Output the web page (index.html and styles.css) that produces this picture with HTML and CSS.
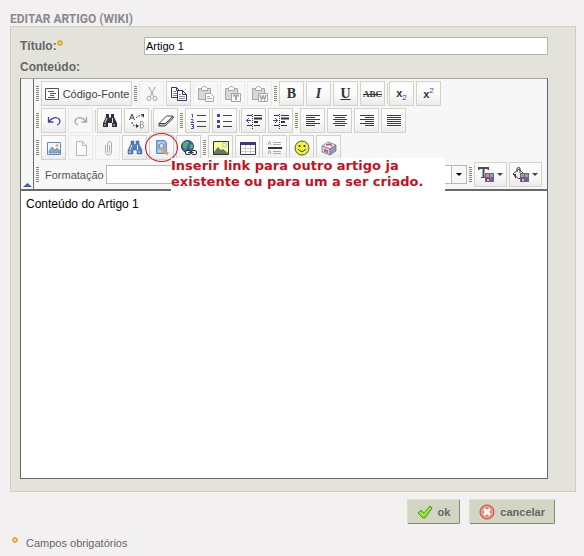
FILE: index.html
```html
<!DOCTYPE html>
<html lang="pt-BR">
<head>
<meta charset="utf-8">
<title>Editar artigo (Wiki)</title>
<link rel="stylesheet" href="styles.css">
</head>
<body>
<form class="page">
  <h1 class="title">EDITAR ARTIGO (WIKI)</h1>
  <section class="panel">
    <div class="field">
      <label class="label" for="titulo">Título:<svg class="star" viewBox="0 0 6 6"><path d="M3 0v6M0 3h6M1 1l4 4M5 1L1 5" stroke="#e8a014"/><path d="M2 2h2v2H2z" fill="#fbe7a8"/></svg></label>
      <input class="text" id="titulo" type="text" value="Artigo 1">
    </div>
    <label class="label content-label" for="conteudo">Conteúdo:</label>
    <div class="editor">
      <div class="toolbar">
        <button class="collapse" type="button" aria-label="Recolher"><svg width="9" height="4" viewBox="0 0 9 4"><path d="M0 4h9L4.500 0z" fill="#3c5fa8"/></svg></button>
        <div class="rows">
          <div class="row">
            <span class="grip"></span>
            <button class="tool source" type="button"><svg viewBox="0 0 16 16"><path d="M1.500 2.500h13v11h-13z" fill="#fff" stroke="#51525c"/><path d="M4 5.500h6M6 7.500h6M6 9.500h4M4 11.500h7" stroke="#51525c"/></svg>Código-Fonte</button>
            <span class="grip"></span>
            <button class="tool" type="button" disabled aria-label="Recortar"><svg viewBox="0 0 16 16" fill="none" stroke="#555"><path d="M5 1l5 10M11 1L6 11"/><circle cx="5" cy="12.500" r="2"/><circle cx="11" cy="12.500" r="2"/></svg></button>
            <button class="tool" type="button" aria-label="Copiar"><svg viewBox="0 0 16 16" fill="#fff" stroke="#343464"><path d="M.5 1.500h5l3 3v7h-8zM5.500 1.500v3h3"/><path d="M2 5.500h3M2 7.500h4M2 9.500h4" stroke="#8888a8"/><path d="M6.500 4.500h5l4 4v6h-9zM11.500 4.500v4h4"/><path d="M8 8.500h2M8 10.500h6M8 12.500h6" stroke="#8888a8"/></svg></button>
            <button class="tool" type="button" disabled aria-label="Colar"><svg viewBox="0 0 16 16" fill="#bbb" stroke="#555"><path d="M.5 2.500h12v11H.5z"/><path d="M3.500 4.500v-2l2-2h2l2 2v2z" fill="#fff"/><path d="M7.500 7.500h5l3 3v5h-8z" fill="#fff"/><path d="M9 10.500h3M9 12.500h5"/></svg></button>
            <button class="tool" type="button" disabled aria-label="Colar como texto"><svg viewBox="0 0 16 16" fill="#bbb" stroke="#555"><path d="M.5 2.500h12v11H.5z"/><path d="M3.500 4.500v-2l2-2h2l2 2v2z" fill="#fff"/><path d="M6.500 7.500h9v8h-9z" fill="#fff"/><path d="M8 9.500h6M11 9v5" stroke-width="2"/></svg></button>
            <button class="tool" type="button" disabled aria-label="Colar do Word"><svg viewBox="0 0 16 16" fill="#bbb" stroke="#555"><path d="M.5 2.500h12v11H.5z"/><path d="M3.500 4.500v-2l2-2h2l2 2v2z" fill="#fff"/><path d="M6.500 7.500h9v8h-9z" fill="#fff"/><path d="M8 9l1.500 4.500L11 10l1.500 3.500L14 9" fill="none" stroke-width="1.500"/></svg></button>
            <span class="grip"></span>
            <button class="tool letter bold" type="button">B</button>
            <button class="tool letter italic" type="button">I</button>
            <button class="tool letter underline" type="button">U</button>
            <button class="tool letter strike" type="button">ABC</button>
            <span class="sep"></span>
            <button class="tool letter script" type="button">x<sub>2</sub></button>
            <button class="tool letter script" type="button">x<sup>2</sup></button>
          </div>
          <div class="row">
            <span class="grip"></span>
            <button class="tool" type="button" aria-label="Desfazer"><svg viewBox="0 0 16 16" fill="none" stroke="#4040a0" stroke-width="1.300"><path d="M2.500 4v5h5M3 8.500c3-4 7-5 10-2.500 2 2 1 5-2 6"/></svg></button>
            <button class="tool" type="button" disabled aria-label="Refazer"><svg viewBox="0 0 16 16" fill="none" stroke="#555" stroke-width="1.300"><path d="M13.500 4v5h-5M13 8.500c-3-4-7-5-10-2.500-2 2-1 5 2 6"/></svg></button>
            <span class="sep"></span>
            <button class="tool" type="button" aria-label="Localizar"><svg viewBox="0 0 16 16"><path d="M4 1h3v3l1 1 1-1V1h3v3l3 6v4h-5v-4H6v4H1v-4l3-6z" fill="#303038"/><path d="M5 5l-2 5M10.500 5v5M3 11v2M12 11v2" stroke="#ddd"/></svg></button>
            <button class="tool" type="button" aria-label="Substituir"><svg viewBox="0 0 16 16" fill="none"><path d="M.5 7l2.500-6 2.500 6M1.500 5h3" stroke="#444"/><path d="M11.500 15V8.500h2q2 1.500 0 3h-2M13.500 11.500q3 1.500 0 3.500h-2" stroke="#999"/><path d="M7 5q2-3 6-2M3 9q0 4 5 4" stroke="#333" stroke-dasharray="2 1"/><path d="M12 1h3v4zM7 11v4l3-2z" fill="#333"/></svg></button>
            <span class="sep"></span>
            <button class="tool" type="button" aria-label="Remover formatação"><svg viewBox="0 0 16 16" stroke="#44444a" stroke-linejoin="round"><path d="M1 10.500L8.500 3H15l-7.500 7.500z" fill="#fff"/><path d="M1 10.500V13h6l8-7.500V3l-7.500 7.500z" fill="#bbb"/></svg></button>
            <span class="grip"></span>
            <button class="tool" type="button" aria-label="Lista numerada"><svg viewBox="0 0 16 16" fill="none"><path d="M7 2.500h9M7 8.500h9M7 13.500h9" stroke="#444"/><path d="M1.500 1.500h1v3M1 6.500h2v1l-2 2h3M1 11.500h2.500v2H2h1.500v2H1" stroke="#4545a5"/></svg></button>
            <button class="tool" type="button" aria-label="Lista com marcadores"><svg viewBox="0 0 16 16"><path d="M6 2.500h9M6 8.500h9M6 13.500h9" stroke="#444"/><path d="M0 1h3v3H0zM0 7h3v3H0zM0 12h3v3H0z" fill="#4545a5"/></svg></button>
            <span class="sep"></span>
            <button class="tool" type="button" aria-label="Diminuir recuo"><svg viewBox="0 0 16 16"><path d="M1 2.500h5M8 2.500h8M8 12.500h6M1 12.500h5" stroke="#333"/><path d="M8 5.500h8M8 9h4" stroke="#333" stroke-width="2"/><path d="M6.500 1v15" stroke="#333" stroke-dasharray="1 1"/><path d="M0 7.500h5M3 5L.5 7.500 3 10" stroke="#4545b5" fill="none"/></svg></button>
            <button class="tool" type="button" aria-label="Aumentar recuo"><svg viewBox="0 0 16 16"><path d="M1 2.500h5M8 2.500h8M8 12.500h6M1 12.500h5" stroke="#333"/><path d="M8 5.500h8M8 9h4" stroke="#333" stroke-width="2"/><path d="M6.500 1v15" stroke="#333" stroke-dasharray="1 1"/><path d="M0 7.500h5M2 5l2.500 2.500L2 10" stroke="#4545b5" fill="none"/></svg></button>
            <span class="grip"></span>
            <button class="tool" type="button" aria-label="Esquerda"><svg viewBox="0 0 16 16" stroke="#3c3c3c"><path d="M1 2.500h14M1 4.500h9M1 6.500h14M1 8.500h9M1 10.500h14M1 12.500h9"/></svg></button>
            <button class="tool" type="button" aria-label="Centralizar"><svg viewBox="0 0 16 16" stroke="#3c3c3c"><path d="M1 2.500h14M3 4.500h10M1 6.500h14M3 8.500h10M1 10.500h14M3 12.500h10"/></svg></button>
            <button class="tool" type="button" aria-label="Direita"><svg viewBox="0 0 16 16" stroke="#3c3c3c"><path d="M1 2.500h14M6 4.500h9M1 6.500h14M6 8.500h9M1 10.500h14M6 12.500h9"/></svg></button>
            <button class="tool" type="button" aria-label="Justificar"><svg viewBox="0 0 16 16" stroke="#3c3c3c"><path d="M1 2.500h14M1 4.500h14M1 6.500h14M1 8.500h14M1 10.500h14M1 12.500h14"/></svg></button>
          </div>
          <div class="row">
            <span class="grip"></span>
            <button class="tool" type="button" aria-label="Imagem"><svg viewBox="0 0 16 16"><path d="M1.500 2.500h13v12h-13z" fill="#f2f8ff" stroke="#6688b8"/><path d="M3 11l3-4 3 3 2-2 3 3v2H3z" fill="#87a9c9" stroke="#5c7fa8" stroke-width=".7"/><circle cx="11" cy="5.500" r="1.500" fill="#f2ad62"/></svg></button>
            <button class="tool" type="button" disabled aria-label="Arquivo"><svg viewBox="0 0 16 16"><path d="M3.500 1.500h6l4 4v10h-10zM9.500 1.500v4h4" fill="#fff" stroke="#777"/></svg></button>
            <button class="tool" type="button" disabled aria-label="Anexo"><svg viewBox="0 0 16 16" fill="none" stroke="#666"><path d="M5.500 5v7q0 3 3 3t3-3V4q0-2.500-2-2.500T7.500 4v7q0 1.500 1 1.500t1-1.500V5"/></svg></button>
            <button class="tool" type="button" aria-label="Pesquisar"><svg viewBox="0 0 16 16"><path d="M4 1h3v3l1 1 1-1V1h3v3l3 6v4h-5v-4H6v4H1v-4l3-6z" fill="#557fb8" stroke="#345c94" stroke-width=".5"/><path d="M5 5l-2 5M10.500 5v5M3 11v2M12 11v2" stroke="#dceaff"/></svg></button>
            <button class="tool marked" type="button" aria-label="Link para artigo"><svg viewBox="0 0 16 16"><path d="M2.500.5h8l2 2v11h-10z" fill="#8fb8e4" stroke="#5e8fc4"/><path d="M4 3h6M4 11h5" stroke="#e5f2ff"/><circle cx="7.500" cy="6" r="2.500" fill="#cfe4f7" stroke="#6b8198"/><path d="M6 8l8 6" stroke="#cfa27a" stroke-width="3"/></svg></button>
            <button class="tool" type="button" aria-label="Link"><svg viewBox="0 0 16 16"><circle cx="6.500" cy="6.500" r="6" fill="#3265b5" stroke="#263f6e"/><path d="M2 3l4-2 2 2-2 3-1 4-3-3zM9 4l3 1v3l-3 1z" fill="#65a95b"/><rect x="4.500" y="10.500" width="5" height="4" rx="1.500" fill="#fff" stroke="#222"/><rect x="10.500" y="10.500" width="5" height="4" rx="1.500" fill="#fff" stroke="#222"/><path d="M7 12.500h6" stroke="#444"/></svg></button>
            <span class="grip"></span>
            <button class="tool" type="button" aria-label="Inserir figura"><svg viewBox="0 0 16 16"><path d="M.5 1.500h15v13H.5z" fill="#fafa94" stroke="#333"/><path d="M1 12l4-5 3 3 2-1 5 4v1H1z" fill="#676"/><circle cx="11.500" cy="5" r="2" fill="#fff" stroke="#777" stroke-width=".5"/></svg></button>
            <button class="tool" type="button" aria-label="Tabela"><svg viewBox="0 0 16 16"><path d="M.5 2.500h15v12H.5z" fill="#fff" stroke="#39395c"/><path d="M0 2h16v3H0z" fill="#38387c"/><path d="M1 8.500h14M1 11.500h14M5.500 5v9M10.500 5v9" stroke="#ccc"/></svg></button>
            <button class="tool" type="button" aria-label="Linha horizontal"><svg viewBox="0 0 16 16"><path d="M6 2.500h8M6 4.500h8M6 11.500h8M6 13.500h8M1 5l1.500-4L4 5M1 14l1.500-4L4 14" stroke="#aaa" fill="none"/><path d="M1 8h14" stroke="#333" stroke-width="2"/></svg></button>
            <button class="tool" type="button" aria-label="Emoticon"><svg viewBox="0 0 16 16"><circle cx="8" cy="8" r="7" fill="#f3ef45" stroke="#5b571c"/><circle cx="5.500" cy="6" r="1" fill="#222"/><circle cx="10.500" cy="6" r="1" fill="#222"/><path d="M4 9q4 5 8 0" fill="none" stroke="#443e12"/></svg></button>
            <button class="tool" type="button" aria-label="Caractere especial"><svg viewBox="0 0 16 16" stroke="#777491" stroke-width=".8"><path d="M1 6l6-4 8 3-6 4z" fill="#f3f1fa"/><path d="M1 6l8 3v6l-8-3z" fill="#d2d3ec"/><path d="M9 9l6-4v6l-6 4z" fill="#9698bd"/><path d="M5 5l4-1 2 2M4 9v3M6 10v3" stroke="#d53b4e" stroke-width="1.500" fill="none"/></svg></button>
          </div>
          <div class="row">
            <span class="grip"></span>
            <label class="format-label" for="formato">Formatação</label>
            <span class="select"><select id="formato"><option></option><option>Normal</option></select></span>
            <span class="grip"></span>
            <button class="tool color" type="button" aria-label="Cor do texto"><svg viewBox="0 0 16 16"><path d="M0 0h11v3H9.500V2h-3v8H8v1H3v-1h1.500V2h-3v1H0z" fill="#4c4c4c"/><path d="M7 6h9v9H7z" fill="#755d96"/><path d="M8 7h3v3H8z" fill="#e47e7c"/><path d="M12 7h3v3h-3z" fill="#62b8b6"/><path d="M8 11h3v3H8z" fill="#3e4fa5"/><path d="M9 12h2v2H9z" fill="#ded84c"/></svg><i class="arrow"></i></button>
            <button class="tool color" type="button" aria-label="Cor de fundo"><svg viewBox="0 0 16 16"><path d="M0 7l6-5 5 5-5 5zM4 5V1q2-1 3 0v5" fill="#eee" stroke="#4c4c4c"/><path d="M0 7l3 5V7z" fill="#444"/><path d="M7 6h9v9H7z" fill="#755d96"/><path d="M8 7h3v3H8z" fill="#e47e7c"/><path d="M12 7h3v3h-3z" fill="#62b8b6"/><path d="M8 11h3v3H8z" fill="#3e4fa5"/><path d="M9 12h2v2H9z" fill="#ded84c"/></svg><i class="arrow"></i></button>
          </div>
        </div>
        <p class="callout">Inserir link para outro artigo ja existente ou para um a ser criado.</p>
      </div>
      <textarea class="body" id="conteudo">Conteúdo do Artigo 1</textarea>
    </div>
  </section>
  <div class="actions">
    <button class="action" type="submit"><svg viewBox="0 0 16 16"><path d="M1 9l3-3 3 3 6-7 2 2-7 10H6z" fill="#8bd32f" stroke="#4f9725" stroke-linejoin="round"/><path d="M3 8.500l3.500 3L13 4" fill="none" stroke="#c8f47c"/></svg>ok</button>
    <button class="action" type="button"><svg viewBox="0 0 16 16"><circle cx="8" cy="8" r="7" fill="#e77f70" stroke="#bd4b42"/><circle cx="8" cy="8" r="5.500" fill="none" stroke="#f3b6aa"/><path d="M5 5l6 6M11 5l-6 6" stroke="#fff" stroke-width="3"/></svg>cancelar</button>
  </div>
  <p class="note"><svg class="star" viewBox="0 0 6 6"><path d="M3 0v6M0 3h6M1 1l4 4M5 1L1 5" stroke="#e8a014"/><path d="M2 2h2v2H2z" fill="#fbe7a8"/></svg>Campos obrigatórios</p>
</form>
</body>
</html>
```
FILE: styles.css
```css
* { box-sizing: border-box; }
body {
  margin: 0;
  background: #f2f0f1;
  color: #666;
  font: 12px/16px "Liberation Sans", Arial, sans-serif;
}
button, input, select, textarea { font: inherit; color: inherit; margin: 0; }
.page { padding: 12px 8px 0 10px; }
.title { margin: 0; font: bold 12px/14px Roboto, "Liberation Sans", sans-serif; color: #8a8a8a; }
.panel {
  padding: 10px 27px 12px 9px;
  background: #e3e3dc;
  border: 1px solid #cfcfc8;
}
.field { display: flex; }
.label { width: 124px; font-weight: bold; line-height: 18px; }
.star { width: 6px; height: 6px; }
.star path:first-child { stroke-width: 1.5; }
.label .star { margin: 0 0 4px; }
.text {
  flex: 1;
  min-width: 0;
  height: 18px;
  padding: 0 1px;
  border: 1px solid #b5b5ae;
  background: #fff;
  color: #000;
  font-size: 11px;
}
.content-label { display: block; margin: 3px 0 2px; }
.editor { border: 1px solid #696969; border-top-color: #a5a59c; background: #fff; }
.toolbar {
  position: relative;
  display: flex;
  background: #f7f7f7;
  border-bottom: 2px solid #696969;
}
.collapse {
  width: 13px;
  padding: 0 0 2px;
  border: 0;
  border-right: 1px solid #696969;
  background: #f7f7f7;
  display: flex;
  align-items: flex-end;
  justify-content: center;
}
.rows {
  flex: 1;
  min-width: 0;
  display: grid;
  gap: 2px;
  padding: 2px 5px 2px 2px;
}
.row { display: flex; align-items: center; gap: 2px; height: 25px; }
.grip {
  flex: none;
  width: 3px;
  height: 16px;
  background: repeating-linear-gradient(#8b866f 0 1px, #f7f7f7 1px 2px);
}
.sep { width: 1px; height: 22px; margin-right: -1px; background: #d3d3ca; }
.tool {
  flex: none;
  width: 25px;
  height: 25px;
  padding: 0;
  display: flex;
  align-items: center;
  justify-content: center;
  border: 1px solid #d3d2c8;
  background: linear-gradient(#fbfbfb 50%, #ebebeb);
}
.tool svg { flex: none; width: 16px; height: 16px; }
.tool:disabled { border-color: #ebeae5; background: #f7f7f7; }
.tool:disabled svg { opacity: .5; }
.source {
  width: 91px;
  gap: 3px;
  font: 11px/16px "Liberation Sans", Arial, sans-serif;
  color: #444;
  white-space: nowrap;
}
.letter { font: bold 14px/16px "Liberation Serif", serif; color: #333; }
.italic { font-style: italic; }
.underline { text-decoration: underline; }
.strike { font-size: 9px; text-decoration: line-through; }
.script { display: block; font: bold 11px/16px "Liberation Sans", sans-serif; }
.script sub, .script sup { font-size: 8px; line-height: 8px; font-weight: normal; color: #4040a0; }
.marked { position: relative; }
.marked::after {
  content: "";
  position: absolute;
  inset: -3px -5px;
  border: 1px solid #cf1a2c;
  border-radius: 50%;
}
.format-label {
  width: 63px;
  padding-left: 4px;
  font: 11px/16px "Liberation Sans", Arial, sans-serif;
  color: #555;
}
.select { position: relative; flex: 1; min-width: 0; height: 19px; display: flex; }
.select select {
  flex: 1;
  min-width: 0;
  appearance: none;
  border: 1px solid #b8b8b0;
  border-radius: 0;
  background: #fff;
}
.select::before {
  content: "";
  position: absolute;
  inset: 1px 1px 1px auto;
  width: 14px;
  border-left: 1px solid #b8b8b0;
  background: #f7f7f7;
  pointer-events: none;
}
.select::after {
  content: "";
  position: absolute;
  right: 5px;
  top: 8px;
  border: 3px solid transparent;
  border-top-color: #000;
  border-bottom: 0;
  pointer-events: none;
}
.color { width: 33px; gap: 3px; }
.arrow { border: 3px solid transparent; border-top-color: #444; border-bottom: 0; }
.callout {
  position: absolute;
  left: 150px;
  top: 79px;
  width: 274px;
  height: 33px;
  margin: 0;
  background: #fff;
  color: #c8101c;
  font: bold 13px/16px "DejaVu Sans", Verdana, sans-serif;
}
.body {
  display: block;
  width: 100%;
  height: 287px;
  padding: 5px;
  border: 0;
  resize: none;
  background: #fff;
  color: #000;
  font-size: 12px;
}
.actions { display: flex; justify-content: flex-end; gap: 9px; padding: 7px 21px 0 0; }
.action {
  display: flex;
  align-items: center;
  gap: 5px;
  height: 25px;
  padding: 0 9px;
  border: 1px solid #dcdcd0;
  border-right-color: #85856f;
  border-bottom-color: #85856f;
  border-radius: 2px;
  background: #d3d5c3;
  font-size: 11px;
  font-weight: bold;
}
.action svg { width: 16px; height: 16px; }
.note { display: flex; gap: 8px; margin: 11px 0 0 2px; font-size: 11px; }
.note .star { margin-top: 2px; }
```
